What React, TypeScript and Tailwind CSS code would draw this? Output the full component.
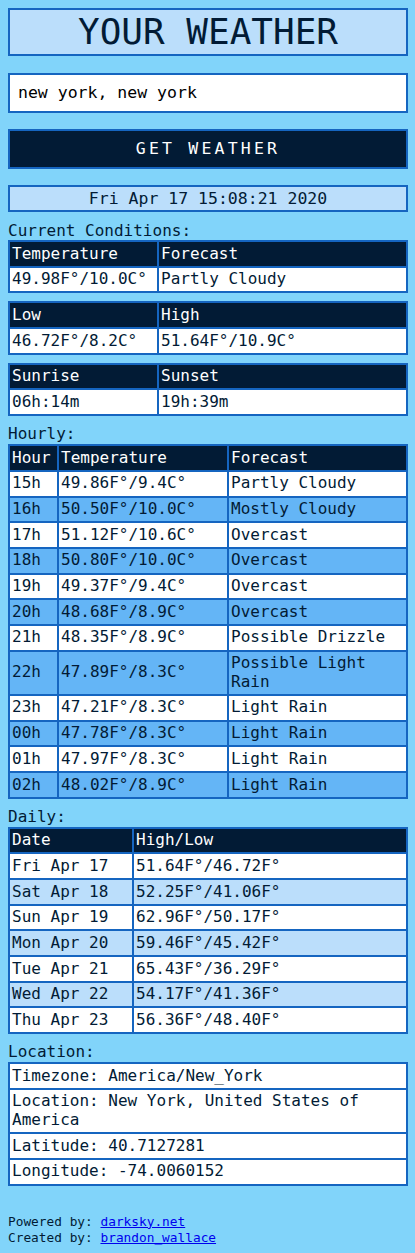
import React from "react";

const hourly: [string, string, string][] = [
  ["15h", "49.86F°/9.4C°", "Partly Cloudy"],
  ["16h", "50.50F°/10.0C°", "Mostly Cloudy"],
  ["17h", "51.12F°/10.6C°", "Overcast"],
  ["18h", "50.80F°/10.0C°", "Overcast"],
  ["19h", "49.37F°/9.4C°", "Overcast"],
  ["20h", "48.68F°/8.9C°", "Overcast"],
  ["21h", "48.35F°/8.9C°", "Possible Drizzle"],
  ["22h", "47.89F°/8.3C°", "Possible Light Rain"],
  ["23h", "47.21F°/8.3C°", "Light Rain"],
  ["00h", "47.78F°/8.3C°", "Light Rain"],
  ["01h", "47.97F°/8.3C°", "Light Rain"],
  ["02h", "48.02F°/8.9C°", "Light Rain"],
];

const daily: [string, string][] = [
  ["Fri Apr 17", "51.64F°/46.72F°"],
  ["Sat Apr 18", "52.25F°/41.06F°"],
  ["Sun Apr 19", "62.96F°/50.17F°"],
  ["Mon Apr 20", "59.46F°/45.42F°"],
  ["Tue Apr 21", "65.43F°/36.29F°"],
  ["Wed Apr 22", "54.17F°/41.36F°"],
  ["Thu Apr 23", "56.36F°/48.40F°"],
];

const location = [
  "Timezone: America/New_York",
  "Location: New York, United States of America",
  "Latitude: 40.7127281",
  "Longitude: -74.0060152",
];

function Head({ children }: { children: React.ReactNode }) {
  return (
    <div className="flex items-center bg-[#021b35] px-[2px] py-[2.55px] leading-[18.6px] text-white">
      {children}
    </div>
  );
}

function Cell({ children, bg }: { children: React.ReactNode; bg: string }) {
  return (
    <div className={`flex items-center px-[2px] py-[2.55px] leading-[18.6px] ${bg}`}>
      {children}
    </div>
  );
}

function PairTable({ h1, h2, v1, v2 }: { h1: string; h2: string; v1: string; v2: string }) {
  return (
    <div className="mt-[8px] grid grid-cols-[147px_1fr] gap-[2px] bg-[#1565c0] p-[2px]">
      <Head>{h1}</Head>
      <Head>{h2}</Head>
      <Cell bg="bg-white">{v1}</Cell>
      <Cell bg="bg-white">{v2}</Cell>
    </div>
  );
}

function Label({ children }: { children: React.ReactNode }) {
  return <div className="mt-[8px] mb-[1px] leading-[19px]">{children}</div>;
}

export default function App() {
  return (
    <div className="min-h-screen bg-[#81d4fa] font-['DejaVu_Sans_Mono',monospace] text-[16px] text-[#021b35]">
      <div className="ml-2 w-[400px] pt-2 pb-[6px]">
        <div className="border-2 border-[#1565c0] bg-[#bbdefb] text-center text-[36px] leading-[44px]">
          YOUR WEATHER
        </div>
        <div className="mt-[17px] flex h-[40px] items-center border-2 border-[#1565c0] bg-white px-[8px] text-[16.5px] text-black">
          new york, new york
        </div>
        <div className="mt-[16px] flex h-[40px] items-center justify-center border-2 border-[#1565c0] bg-[#021b35] text-[16.5px] tracking-[3.2px] text-white">
          GET WEATHER
        </div>
        <div className="mt-[16px] border-2 border-[#1565c0] bg-[#bbdefb] text-center text-[16.5px] leading-[23px]">
          Fri Apr 17 15:08:21 2020
        </div>

        <div className="mt-[9px] mb-[1px] leading-[19px]">Current Conditions:</div>
        <div className="-mt-[8px]">
          <PairTable h1="Temperature" h2="Forecast" v1="49.98F°/10.0C°" v2="Partly Cloudy" />
        </div>
        <PairTable h1="Low" h2="High" v1="46.72F°/8.2C°" v2="51.64F°/10.9C°" />
        <PairTable h1="Sunrise" h2="Sunset" v1="06h:14m" v2="19h:39m" />

        <Label>Hourly:</Label>
        <div className="grid grid-cols-[47px_168px_1fr] gap-[2px] bg-[#1565c0] p-[2px]">
          <Head>Hour</Head>
          <Head>Temperature</Head>
          <Head>Forecast</Head>
          {hourly.map((r, i) => {
            const bg = i % 2 === 1 ? "bg-[#64b5f6]" : "bg-white";
            return (
              <React.Fragment key={r[0]}>
                <Cell bg={bg}>{r[0]}</Cell>
                <Cell bg={bg}>{r[1]}</Cell>
                <Cell bg={bg}>{r[2]}</Cell>
              </React.Fragment>
            );
          })}
        </div>

        <Label>Daily:</Label>
        <div className="grid grid-cols-[122px_1fr] gap-[2px] bg-[#1565c0] p-[2px]">
          <Head>Date</Head>
          <Head>High/Low</Head>
          {daily.map((r, i) => {
            const bg = i % 2 === 1 ? "bg-[#bbdefb]" : "bg-white";
            return (
              <React.Fragment key={r[0]}>
                <Cell bg={bg}>{r[0]}</Cell>
                <Cell bg={bg}>{r[1]}</Cell>
              </React.Fragment>
            );
          })}
        </div>

        <Label>Location:</Label>
        <div className="grid grid-cols-1 gap-[2px] bg-[#1565c0] p-[2px]">
          {location.map((l) => (
            <Cell key={l} bg="bg-white">
              {l}
            </Cell>
          ))}
        </div>

        <div className="mt-[28px] text-[12.8px] leading-[16px]">
          <div>
            Powered by:{" "}
            <a href="#" className="text-[#0000ee] underline">
              darksky.net
            </a>
          </div>
          <div>
            Created by:{" "}
            <a href="#" className="text-[#0000ee] underline">
              brandon_wallace
            </a>
          </div>
        </div>
      </div>
    </div>
  );
}
